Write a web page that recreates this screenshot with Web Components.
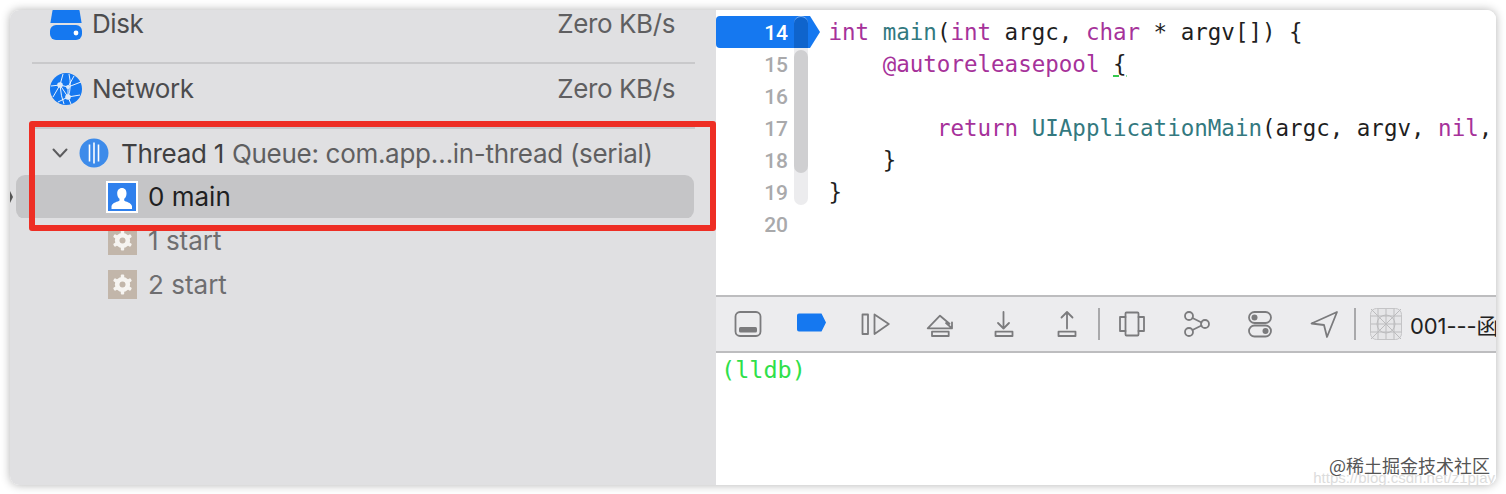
<!DOCTYPE html>
<html>
<head>
<meta charset="utf-8">
<style>
    html, body { margin: 0; padding: 0; background: #fff; }
    body { width: 1506px; height: 494px; overflow: hidden; font-family: "Inter", "Liberation Sans", sans-serif; }
</style>
</head>
<body>
<xc-window>
    <xc-sidebar slot="left">
        <xc-gauge label="Disk" value="Zero KB/s" icon="disk"></xc-gauge>
        <xc-gauge label="Network" value="Zero KB/s" icon="network"></xc-gauge>
        <xc-thread name="Thread 1" queue="Queue: com.app…in-thread (serial)"></xc-thread>
        <xc-frame label="0 main" icon="user" selected></xc-frame>
        <xc-frame label="1 start" icon="gear"></xc-frame>
        <xc-frame label="2 start" icon="gear"></xc-frame>
    </xc-sidebar>
    <xc-editor slot="right"></xc-editor>
    <xc-debugbar slot="right"></xc-debugbar>
    <xc-console slot="right"></xc-console>
</xc-window>

<script>
(() => {

    const ICONS = {
        disk: `<svg width="32" height="38" viewBox="0 0 32 38"><path d="M6 0h20c2 0 3 1 3.600 3l2 12H.4l2-12C3 1 4 0 6 0z" fill="#1578f0"/><rect x="0" y="17" width="32" height="15" rx="6" fill="#1578f0"/><circle cx="26" cy="25" r="2.400" fill="#fff"/></svg>`,
        network: `<svg width="32" height="32" viewBox="0 0 32 32"><circle cx="16" cy="16" r="16" fill="#1578f0"/><g fill="none" stroke="#fff" stroke-width="1" opacity=".9"><path d="M10 12L18 14L31 9M10 12L18 24L30 22M10 12L3 24M18 14L18 24L21 31M18 14L24 3M10 12L13 1M10 12Q11 24 14 31M18 24Q22 14 19 1M18 24L8 29M1 13L10 12"/></g><g fill="#dfeaf8"><circle cx="10" cy="12" r="2.800"/><circle cx="18" cy="14" r="2"/><circle cx="18" cy="24" r="2.800"/></g></svg>`,
        user: `<svg width="32" height="32" viewBox="0 0 32 32"><rect width="32" height="32" fill="#fff"/><rect x="2" y="2" width="28" height="28" fill="#2f80ed"/><path d="M16 7c3 0 4.500 2.400 4.500 5.400 0 2.400-1 4.400-2.300 5.400v1.700c1 1.200 7.300 2 7.800 5.800v2.700H5.500v-2.700c.5-3.800 6.800-4.600 8-5.800v-1.700c-1.300-1-2.300-3-2.300-5.400C11.200 9.400 13 7 16 7z" fill="#fff"/></svg>`,
        gear: `<svg width="29" height="29" viewBox="0 0 29 29"><rect width="29" height="29" fill="#c2b6aa"/><g fill="#f6f4f1"><circle cx="14.500" cy="14.500" r="7.600"/><rect x="12.800" y="4.500" width="3.400" height="20" rx="1"/><rect x="12.800" y="4.500" width="3.400" height="20" rx="1" transform="rotate(60 14.500 14.500)"/><rect x="12.800" y="4.500" width="3.400" height="20" rx="1" transform="rotate(120 14.500 14.500)"/></g><circle cx="14.500" cy="14.500" r="3" fill="#c2b6aa"/></svg>`
    }

    const stroke = `fill="none" stroke="#7b7b7d" stroke-width="1.800" stroke-linecap="round" stroke-linejoin="round"`

    const BAR_ICONS = [
        `<rect x="3.500" y="4" width="25" height="24" rx="4.500" ${stroke}/><rect x="7" y="19" width="18" height="5.500" rx="1.500" fill="#7b7b7d"/>`,
        `<path d="M1 7.500a2 2 0 0 1 2-2h22.500l4.500 9-4.500 9H3a2 2 0 0 1-2-2z" fill="#1578f0"/>`,
        `<rect x="2.500" y="6.500" width="5.500" height="19.500" ${stroke}/><path d="M14.500 6.500L28.800 16 14.500 26z" ${stroke}/>`,
        `<path d="M3.700 20.300L16 7.700l9.500 8M3.700 20.300h24.300v-6M28 20.300l-6-5.300" ${stroke}/><rect x="8" y="23.700" width="16.700" height="4.300" ${stroke}/>`,
        `<path d="M15.500 4v16.500M10 15l5.500 5.500L21 15" ${stroke}/><rect x="7.500" y="23.700" width="17" height="4.300" ${stroke}/>`,
        `<path d="M15 20.500V4M9.500 9.500L15 4l5.500 5.500" ${stroke}/><rect x="6.500" y="23.700" width="17" height="4.300" ${stroke}/>`,
        null,
        `<path d="M9.500 9H4v14h5.500M22.500 9H28v14h-5.500" ${stroke}/><rect x="9.500" y="4.500" width="13" height="23" rx="1" ${stroke}/>`,
        `<circle cx="9" cy="8" r="4" ${stroke}/><circle cx="9" cy="24" r="4" ${stroke}/><circle cx="25" cy="16" r="4" ${stroke}/><path d="M12.500 10l9 4.500M12.500 22l9-4.500" ${stroke}/>`,
        `<rect x="5" y="4" width="22" height="11" rx="5.500" ${stroke}/><circle cx="10.500" cy="9.500" r="3" fill="#7b7b7d"/><rect x="5" y="17.500" width="22" height="11" rx="5.500" ${stroke}/><circle cx="21.500" cy="23" r="3" fill="#7b7b7d"/>`,
        `<path d="M29 4L3.500 15.500 16 17l3 12z" ${stroke}/>`,
        null
    ]

    customElements.define("xc-window", class extends HTMLElement {
        constructor(){
            super()
            this.attachShadow({mode: 'open'}).innerHTML = `
                <style>
                    :host {
                        display: grid;
                        grid-template-columns: 706px 780px;
                        width: 1486px;
                        height: 475px;
                        margin: 10px 10px 9px;
                        border-radius: 9px;
                        overflow: hidden;
                        position: relative;
                        box-shadow: 0 0 10px rgba(0,0,0,.3);
                    }
                    .left { display: block; background: #e0e0e2; overflow: hidden; }
                    .right { display: flex; flex-direction: column; background: #fff; overflow: hidden; min-width: 0; }
                    .marker {
                        position: absolute; left: 19px; top: 111px; width: 675px; height: 98px;
                        border: 6px solid #ee2e24; border-radius: 3px;
                    }
                    .nub {
                        position: absolute; left: 0; top: 181px; width: 0; height: 0;
                        border-left: 3px solid #555; border-top: 6px solid transparent; border-bottom: 6px solid transparent;
                    }
                    .mark-a, .mark-b { position: absolute; white-space: nowrap; }
                    .mark-a {
                        right: 6px; top: 442px; font: 18px/26px "Noto Sans CJK SC", sans-serif; color: #555;
                        text-shadow: 0 0 2px #fff;
                    }
                    .mark-b {
                        right: 1px; top: 459px; font: 15px/18px "Liberation Sans", sans-serif; color: #dcdcdc;
                    }
                </style>
                <slot class="left" name="left"></slot>
                <slot class="right" name="right"></slot>
                <div class="marker"></div>
                <div class="nub"></div>
                <div class="mark-b">https://blog.csdn.net/z1pjay</div>
                <div class="mark-a">@稀土掘金技术社区</div>
            `
        }
    })

    customElements.define("xc-sidebar", class extends HTMLElement {
        constructor(){
            super()
            this.attachShadow({mode: 'open'}).innerHTML = `
                <style>
                    :host { display: block; margin-top: -11px; }
                </style>
                <slot></slot>
            `
        }
    })

    customElements.define("xc-gauge", class extends HTMLElement {
        constructor(){
            super()
            this.attachShadow({mode: 'open'})
        }
        connectedCallback(){
            this.shadowRoot.innerHTML = `
                <style>
                    :host {
                        display: flex;
                        align-items: center;
                        box-sizing: border-box;
                        height: 65px;
                        margin: 0 21px 0 22px;
                        padding: 0 20px 14px 18px;
                        border-bottom: 2px solid #c9c9cb;
                        font-size: 26px;
                        letter-spacing: -.4px;
                    }
                    .icon { width: 32px; height: 32px; margin-right: 10px; display: flex; align-items: flex-start; }
                    .label { flex: 1; color: #4c4c4e; }
                    .value { color: #5f5f61; }
                </style>
                <span class="icon">${ICONS[this.getAttribute("icon")]}</span>
                <span class="label">${this.getAttribute("label")}</span>
                <span class="value">${this.getAttribute("value")}</span>
            `
        }
    })

    customElements.define("xc-thread", class extends HTMLElement {
        constructor(){
            super()
            this.attachShadow({mode: 'open'})
        }
        connectedCallback(){
            this.shadowRoot.innerHTML = `
                <style>
                    :host {
                        display: flex;
                        align-items: center;
                        box-sizing: border-box;
                        height: 46px;
                        padding: 2px 0 0 42px;
                        font-size: 26px;
                        letter-spacing: -.3px;
                        white-space: nowrap;
                    }
                    svg { display: block; flex: none; }
                    .chev { margin-right: 11px; }
                    .dot { margin-right: 12px; }
                    .name { color: #3f3f41; margin-right: 8px; }
                    .queue { color: #5f5f61; }
                </style>
                <svg class="chev" width="16" height="10" viewBox="0 0 16 10"><path d="M1.500 1.500L8 8.500l6.500-7" fill="none" stroke="#5c5c5e" stroke-width="2" stroke-linecap="round" stroke-linejoin="round"/></svg>
                <svg class="dot" width="30" height="30" viewBox="0 0 30 30"><circle cx="15" cy="15" r="14.500" fill="#3d8bea"/><path d="M10.500 6.500v17M15 4.500v21M19.500 6.500v17" stroke="#fff" stroke-width="1.600"/></svg>
                <span class="name">${this.getAttribute("name")}</span>
                <span class="queue">${this.getAttribute("queue")}</span>
            `
        }
    })

    customElements.define("xc-frame", class extends HTMLElement {
        constructor(){
            super()
            this.attachShadow({mode: 'open'})
        }
        connectedCallback(){
            this.shadowRoot.innerHTML = `
                <style>
                    :host {
                        display: flex;
                        align-items: center;
                        box-sizing: border-box;
                        height: 44px;
                        margin: 0 22px 0 6px;
                        padding: 0 0 1px 90px;
                        font-size: 26px;
                        color: #6e6e70;
                    }
                    :host([selected]) {
                        background: linear-gradient(#c5c5c7 0, #c5c5c7 43px, transparent 43px);
                        border-radius: 9px;
                        color: #1f1f21;
                    }
                    .icon { width: 32px; height: 32px; margin-right: 10px; display: flex; align-items: center; justify-content: center; }
                </style>
                <span class="icon">${ICONS[this.getAttribute("icon")]}</span>
                <span>${this.getAttribute("label")}</span>
            `
        }
    })

    customElements.define("xc-editor", class extends HTMLElement {
        constructor(){
            super()
            let lines = [
                [14, `<b>int</b> <i>main</i>(<b>int</b> argc, <b>char</b> * argv[]) {`],
                [15, `    <b>@autoreleasepool</b> <u>{</u>`],
                [16, ``],
                [17, `        <b>return</b> <i>UIApplicationMain</i>(argc, argv, <b>nil</b>,`],
                [18, `    }`],
                [19, `}`],
                [20, ``]
            ]
            this.attachShadow({mode: 'open'}).innerHTML = `
                <style>
                    :host {
                        display: block;
                        position: relative;
                        box-sizing: border-box;
                        height: 285px;
                        flex: none;
                        padding-top: 6px;
                        overflow: hidden;
                    }
                    .line { display: flex; height: 32px; align-items: center; white-space: pre; }
                    .num {
                        box-sizing: border-box;
                        flex: none;
                        width: 104px;
                        margin-right: 8.500px;
                        height: 32px;
                        padding-right: 32px;
                        text-align: right;
                        font: 500 21px/34px "Roboto", sans-serif;
                        color: #a9a9ab;
                    }
                    .current .num {
                        background: #1578f0;
                        color: #fff;
                        border-radius: 4px 0 0 4px;
                        clip-path: polygon(0 0, 94px 0, 104px 50%, 94px 100%, 0 100%);
                    }
                    code { font: 22.500px/32px "DejaVu Sans Mono", monospace; color: #1f1f1f; }
                    b { font-weight: normal; color: #a6329a; }
                    i { font-style: normal; color: #33797f; }
                    u { text-decoration: underline; text-decoration-color: #35c94e; text-underline-offset: 3px; text-decoration-thickness: 2px; }
                    .thumb {
                        position: absolute; left: 78px; top: 6px; width: 14px; height: 189px;
                        background: #ececee; border-radius: 7px;
                    }
                    .thumb::before {
                        content: ""; position: absolute; left: 0; right: 0; top: 34px; height: 123px;
                        background: #cfcfd1; border-radius: 7px;
                    }
                    .thumb-top {
                        position: absolute; left: 78px; top: 6px; width: 14px; height: 32px;
                        background: #0f64cc; border-radius: 7px 7px 0 0; box-sizing: border-box;
                        border-top: 1px solid #7fb4f5;
                    }
                </style>
                <div class="thumb"></div>
                ${lines.map(([n, src]) => `
                    <div class="line ${n == 14 ? "current" : ""}"><span class="num">${n}</span><code>${src}</code></div>
                `).join("")}
                <div class="thumb-top"></div>
            `
        }
    })

    customElements.define("xc-debugbar", class extends HTMLElement {
        constructor(){
            super()
            let items = BAR_ICONS.map(body => body == null
                ? `<span class="sep"></span>`
                : `<span class="btn"><svg width="32" height="32" viewBox="0 0 32 32">${body}</svg></span>`
            ).join("")
            this.attachShadow({mode: 'open'}).innerHTML = `
                <style>
                    :host {
                        display: flex;
                        align-items: center;
                        flex: none;
                        box-sizing: border-box;
                        height: 58px;
                        background: #ececee;
                        border-top: 2px solid #bdbdbf;
                        border-bottom: 2px solid #bdbdbf;
                        overflow: hidden;
                        white-space: nowrap;
                    }
                    .btn { flex: none; width: 64px; height: 32px; display: flex; justify-content: center; }
                    .sep { flex: none; width: 2px; height: 32px; background: #a9a9ab; margin-right: -1px; margin-left: -1px; transform: translateX(-1px); }
                    .app { flex: none; margin-left: 14px; margin-right: 8px; display: block; }
                    .title { flex: none; font-size: 22px; color: #222; letter-spacing: -.1px; font-family: "Inter", "Noto Sans CJK SC", sans-serif; }
                </style>
                ${items}
                <svg class="app" width="32" height="32" viewBox="0 0 32 32">
                    <rect x=".5" y=".5" width="31" height="31" rx="6" fill="#e6e6e8" stroke="#c4c4c6"/>
                    <path d="M8 1v30M16 1v30M24 1v30M1 8h30M1 16h30M1 24h30M1 1l30 30M31 1L1 31" stroke="#bcbcbe" stroke-width="1" fill="none"/>
                    <circle cx="16" cy="16" r="9" stroke="#bcbcbe" fill="none"/>
                </svg>
                <span class="title">001---函数调用栈</span>
            `
        }
    })

    customElements.define("xc-console", class extends HTMLElement {
        constructor(){
            super()
            this.attachShadow({mode: 'open'}).innerHTML = `
                <style>
                    :host {
                        display: block;
                        flex: 1;
                        padding: 2px 0 0 5px;
                        background: #fff;
                        font: 23.500px/30px "DejaVu Sans Mono", monospace;
                        color: #2fe04a;
                    }
                </style>
                (lldb)
            `
        }
    })

})()
</script>
</body>
</html>
